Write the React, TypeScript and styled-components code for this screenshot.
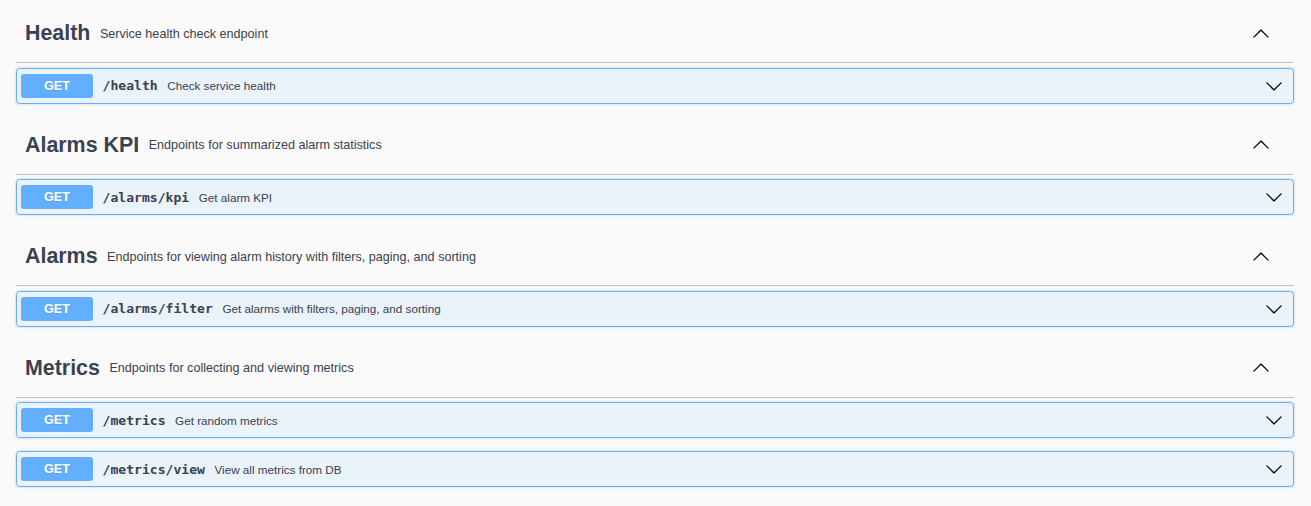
import React from "react";
import styled, { createGlobalStyle } from "styled-components";

const Global = createGlobalStyle`
  html, body { margin: 0; padding: 0; background: #fafafa; }
  body { font-family: "Liberation Sans", Arial, sans-serif; color: #3b4151; }
`;

const Page = styled.div`
  padding: 5px 17px 0 16px;
`;

const Section = styled.section`
  display: flex;
  flex-direction: column;
`;

const Tag = styled.h3`
  display: flex;
  align-items: center;
  height: 57px;
  margin: 0 0 4.5px;
  padding: 0 18px 0 9px;
  border-bottom: 1px solid rgba(59, 65, 81, 0.3);
  font-family: "Liberation Sans", Arial, sans-serif;
  font-size: 21.4px;
  font-weight: 700;
  color: #3b4151;
  box-sizing: content-box;
`;

const TagDesc = styled.small`
  flex: 1;
  padding: 0 9px 0 9.5px;
  font-size: 12.6px;
  font-weight: 400;
`;

const ArrowBtn = styled.span<{ $pad?: number }>`
  display: flex;
  align-items: center;
  padding-right: ${(p) => p.$pad ?? 0}px;
  color: #000;
`;

const Op = styled.div`
  display: flex;
  align-items: center;
  height: 24px;
  padding: 5px 4.5px 5px 4px;
  margin: 0 0 13px;
  border: 1px solid #61affe;
  border-radius: 3.6px;
  background: rgba(97, 175, 254, 0.1);
  box-shadow: 0 0 3px rgba(0, 0, 0, 0.19);
`;

const Method = styled.span`
  display: flex;
  align-items: center;
  justify-content: center;
  width: 72px;
  height: 24px;
  border-radius: 3px;
  background: #61affe;
  color: #fff;
  font-family: "Liberation Sans", Arial, sans-serif;
  font-size: 12.6px;
  font-weight: 700;
  text-shadow: 0 1px 0 rgba(0, 0, 0, 0.1);
`;

const Path = styled.span`
  padding: 0 9.5px 0 9.5px;
  font-family: "DejaVu Sans Mono", "Liberation Mono", monospace;
  font-size: 13.1px;
  font-weight: 700;
  color: #3b4151;
`;

const Summary = styled.span`
  flex: 1 1 auto;
  font-family: "Liberation Sans", Arial, sans-serif;
  font-size: 11.7px;
  color: #3b4151;
`;

const Chevron = ({ up }: { up?: boolean }) => (
  <svg
    width="18"
    height="18"
    viewBox="0 0 20 20"
    style={up ? { transform: "rotate(180deg)" } : undefined}
  >
    <path
      fill="currentColor"
      d="M17.418 6.109c.272-.268.709-.268.979 0s.271.701 0 .969l-7.908 7.83c-.27.268-.707.268-.979 0l-7.908-7.83c-.27-.268-.27-.701 0-.969.271-.268.709-.268.979 0L10 13.25l7.418-7.141z"
    />
  </svg>
);

type OpT = { path: string; summary: string };
type TagT = { name: string; desc: string; ops: OpT[] };

const data: TagT[] = [
  { name: "Health", desc: "Service health check endpoint", ops: [{ path: "/health", summary: "Check service health" }] },
  { name: "Alarms KPI", desc: "Endpoints for summarized alarm statistics", ops: [{ path: "/alarms/kpi", summary: "Get alarm KPI" }] },
  {
    name: "Alarms",
    desc: "Endpoints for viewing alarm history with filters, paging, and sorting",
    ops: [{ path: "/alarms/filter", summary: "Get alarms with filters, paging, and sorting" }],
  },
  {
    name: "Metrics",
    desc: "Endpoints for collecting and viewing metrics",
    ops: [
      { path: "/metrics", summary: "Get random metrics" },
      { path: "/metrics/view", summary: "View all metrics from DB" },
    ],
  },
];

export default function App() {
  return (
    <>
      <Global />
      <Page>
        {data.map((t) => (
          <Section key={t.name}>
            <Tag>
              <span>{t.name}</span>
              <TagDesc>{t.desc}</TagDesc>
              <ArrowBtn $pad={6}>
                <Chevron up />
              </ArrowBtn>
            </Tag>
            {t.ops.map((o) => (
              <Op key={o.path}>
                <Method>GET</Method>
                <Path>{o.path}</Path>
                <Summary>{o.summary}</Summary>
                <ArrowBtn $pad={6}>
                  <Chevron />
                </ArrowBtn>
              </Op>
            ))}
          </Section>
        ))}
      </Page>
    </>
  );
}
